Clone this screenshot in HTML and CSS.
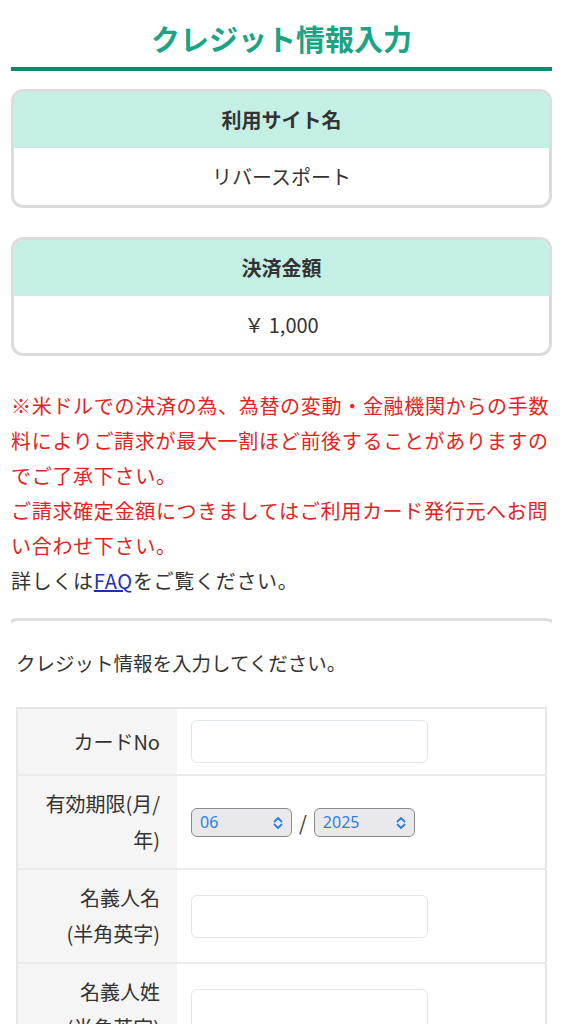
FILE: index.html
```html
<!DOCTYPE html>
<html lang="ja">

<head>
  <meta charset="utf-8">
  <title>クレジット情報入力</title>
  <link rel="stylesheet" href="styles.css">
</head>

<body>
  <h1 class="page-title">クレジット情報入力</h1>

  <div class="info-box">
    <div class="info-head">利用サイト名</div>
    <div class="info-body">リバースポート</div>
  </div>

  <div class="info-box">
    <div class="info-head">決済金額</div>
    <div class="info-body">￥ 1,000</div>
  </div>

  <div class="notice">
    <p class="warn">※米ドルでの決済の為、為替の変動・金融機関からの手数料によりご請求が最大一割ほど前後することがありますのでご了承下さい。</p>
    <p class="warn">ご請求確定金額につきましてはご利用カード発行元へお問い合わせ下さい。</p>
    <p>詳しくは<a href="#">FAQ</a>をご覧ください。</p>
  </div>

  <div class="form-box">
    <p class="form-lead">クレジット情報を入力してください。</p>

    <table class="form-table">
      <tr>
        <th>カードNo</th>
        <td><input type="text" class="text-input"></td>
      </tr>
      <tr>
        <th>有効期限(月/<br>年)</th>
        <td>
          <div class="expire">
            <span class="select-wrap">
              <select class="select">
                <option>06</option>
              </select>
              <svg class="chev" width="10" height="14" viewBox="0 0 10 14">
                <path d="M1.5 5.5 L5 2 L8.5 5.5 M1.5 8.5 L5 12 L8.5 8.5" fill="none" stroke="#2f7fe0" stroke-width="1.8" stroke-linecap="round" stroke-linejoin="round"/>
              </svg>
            </span>
            <span class="slash">/</span>
            <span class="select-wrap">
              <select class="select">
                <option>2025</option>
              </select>
              <svg class="chev" width="10" height="14" viewBox="0 0 10 14">
                <path d="M1.5 5.5 L5 2 L8.5 5.5 M1.5 8.5 L5 12 L8.5 8.5" fill="none" stroke="#2f7fe0" stroke-width="1.8" stroke-linecap="round" stroke-linejoin="round"/>
              </svg>
            </span>
          </div>
        </td>
      </tr>
      <tr>
        <th>名義人名<br>(半角英字)</th>
        <td><input type="text" class="text-input"></td>
      </tr>
      <tr>
        <th>名義人姓<br>(半角英字)</th>
        <td><input type="text" class="text-input"></td>
      </tr>
    </table>
  </div>
</body>

</html>
```

FILE: styles.css
```css
body {
  margin: 0 11px 40px;
  font-family: "Noto Sans CJK JP", "Noto Sans", sans-serif;
  color: #333;
  background: #fff;
}

/* page heading with the green rule under it */
.page-title {
  margin: 0;
  padding: 18px 0 9px;
  font-size: 29px;
  line-height: 40px;
  font-weight: 700;
  text-align: center;
  color: #1aa483;
  border-bottom: 4px solid #0c8a6b;
}

.info-box {
  margin-top: 18px;
  border: 3px solid #dcdcdc;
  border-radius: 12px;
  overflow: hidden;
  text-align: center;
}

.info-box + .info-box {
  margin-top: 29px;
}

.info-head {
  background: #c4efe5;
  font-size: 20px;
  font-weight: 700;
  line-height: 56px;
}

.info-body {
  font-size: 20px;
  line-height: 57px;
}

.notice {
  margin-top: 32px;
  font-size: 20px;
  line-height: 35px;
  letter-spacing: 0.7px;
}

.notice p {
  margin: 0;
}

.warn {
  color: #e32422;
}

.notice a {
  color: #1f2fb4;
}

/* the form card sticks out wider than the boxes above */
.form-box {
  margin: 20px -9px 0;
  padding: 24px 11px 20px 11px;
  border: 3px solid #dddddd;
  border-radius: 16px;
}

.form-lead {
  margin: 0 0 26px;
  font-size: 19.5px;
  line-height: 36px;
}

.form-table {
  width: 100%;
  border-collapse: collapse;
  border: 2px solid #e6e6e6;
}

.form-table tr {
  border-bottom: 2px solid #ebebeb;
}

.form-table th {
  width: 160px;
  padding: 10px 17px 10px 0;
  background: #f5f5f5;
  font-size: 20px;
  font-weight: 400;
  line-height: 36px;
  text-align: right;
  box-sizing: border-box;
}

.form-table td {
  padding: 11px 14px;
  background: #fff;
}

.text-input {
  display: block;
  width: 237px;
  height: 43px;
  box-sizing: border-box;
  border: 1px solid #dfe7ec;
  border-radius: 6px;
  background: #fff;
}

.expire {
  display: flex;
  align-items: center;
  gap: 7px;
}

.select-wrap {
  position: relative;
  display: inline-block;
}

.select {
  appearance: none;
  -webkit-appearance: none;
  width: 101px;
  height: 29px;
  padding: 0 0 0 8px;
  border: 1px solid #8a8a8a;
  border-radius: 6px;
  background: #e9e9eb;
  color: #2f7fe0;
  font-family: "Noto Sans", "Liberation Sans", sans-serif;
  font-size: 16px;
}

.chev {
  position: absolute;
  right: 9px;
  top: 8px;
  pointer-events: none;
}

.slash {
  font-size: 20px;
  color: #333;
}
```
